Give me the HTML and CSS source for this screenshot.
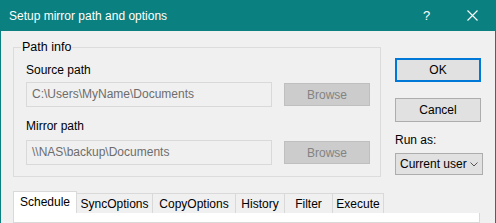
FILE: index.html
```html
<!DOCTYPE html>
<html>
<head>
<meta charset="utf-8">
<link rel="stylesheet" href="styles.css">
</head>
<body>
<div class="window">
  <div class="titlebar">
    <span class="title">Setup mirror path and options</span>
    <span class="help">?</span>
    <span class="close"><svg width="11" height="11" viewBox="0 0 11 11"><path d="M0.5 0.5 L10.5 10.5 M10.5 0.5 L0.5 10.5" stroke="#fff" stroke-width="1.1" fill="none"/></svg></span>
  </div>
  <div class="content">
    <div class="top">
      <fieldset class="group">
        <legend>Path info</legend>
        <div class="label first">Source path</div>
        <div class="row first">
          <div class="input">C:\Users\MyName\Documents</div>
          <div class="btn disabled">Browse</div>
        </div>
        <div class="label">Mirror path</div>
        <div class="row">
          <div class="input">\\NAS\backup\Documents</div>
          <div class="btn disabled">Browse</div>
        </div>
      </fieldset>
      <div class="side">
        <div class="btn default">OK</div>
        <div class="btn normal">Cancel</div>
        <div class="runlabel">Run as:</div>
        <div class="combo"><span class="combotext">Current user</span><svg class="chev" width="8" height="5" viewBox="0 0 8 5"><path d="M0.5 0.5 L4 4 L7.5 0.5" stroke="#555" stroke-width="1" fill="none"/></svg></div>
      </div>
    </div>
    <div class="tabs">
      <div class="tab active t-schedule">Schedule</div>
      <div class="tab t-sync">SyncOptions</div>
      <div class="tab t-copy">CopyOptions</div>
      <div class="tab t-history">History</div>
      <div class="tab t-filter">Filter</div>
      <div class="tab t-execute">Execute</div>
    </div>
    <div class="panel"></div>
  </div>
</div>
</body>
</html>
```

FILE: styles.css
```css
* { box-sizing: border-box; }
html, body { margin: 0; padding: 0; }
body {
  width: 496px;
  height: 223px;
  overflow: hidden;
  background: #f0f0f0;
  font-family: "Liberation Sans", Arial, sans-serif;
  font-size: 12px;
  color: #000;
}
.window {
  width: 496px;
  height: 223px;
  border-left: 1px solid #0a8080;
  border-right: 1px solid #0a8080;
  background: #f0f0f0;
  display: flex;
  flex-direction: column;
}
.titlebar {
  height: 31px;
  flex: none;
  background: #0a8080;
  color: #fff;
  display: flex;
  align-items: center;
  padding-left: 8px;
  font-size: 12px;
}
.title { flex: 1; }
.help { width: 7px; margin-right: 37px; font-size: 13px; }
.close { width: 11px; height: 11px; margin-right: 17px; display: flex; }
.content {
  flex: 1;
  padding-left: 12px;
  display: flex;
  flex-direction: column;
}
.top {
  display: flex;
  align-items: flex-start;
}
.group {
  margin: 9px 0 0 0;
  width: 368px;
  height: 137px;
  border: 1px solid #dcdcdc;
  padding: 0 10px 0 12px;
}
.group legend {
  padding: 0 1px;
  margin-left: -5px;
  line-height: 15px;
  font-size: 12.5px;
}
.label {
  line-height: 15px;
  margin-top: 2px;
}
.label.first { margin-top: 8px; }
.row {
  display: flex;
  align-items: center;
  margin-top: 6px;
  margin-bottom: 12px;
}
.row.first { margin-top: 4px; }
.input {
  width: 246px;
  height: 25px;
  border: 1px solid #d9d9d9;
  background: #f0f0f0;
  color: #6d6d6d;
  padding-left: 5px;
  line-height: 23px;
}
.btn {
  display: flex;
  align-items: center;
  justify-content: center;
}
.btn.disabled {
  margin-left: 12px;
  width: 86px;
  height: 23px;
  background: #cccccc;
  border: 1px solid #bfbfbf;
  color: #838383;
}
.side {
  margin-left: 14px;
  padding-top: 27px;
  display: flex;
  flex-direction: column;
}
.btn.default {
  width: 86px;
  height: 24px;
  background: #e1e1e1;
  border: 2px solid #0078d7;
}
.btn.normal {
  margin-top: 16px;
  width: 86px;
  height: 24px;
  background: #e1e1e1;
  border: 1px solid #adadad;
}
.runlabel {
  margin-top: 11px;
  line-height: 15px;
}
.combo {
  margin-top: 5px;
  width: 88px;
  height: 22px;
  background: #e1e1e1;
  border: 1px solid #adadad;
  display: flex;
  align-items: center;
  padding-left: 4px;
  overflow: hidden;
}
.combotext {
  width: 67px;
  flex: none;
  white-space: nowrap;
}
.chev { margin-left: 3px; flex: none; }
.tabs {
  margin-top: 14px;
  display: flex;
  align-items: flex-end;
  height: 22px;
}
.tab {
  height: 20px;
  border: 1px solid #d9d9d9;
  border-left: none;
  border-bottom: none;
  background: #f0f0f0;
  text-align: center;
  line-height: 21px;
  white-space: nowrap;
}
.tab.active {
  height: 22px;
  background: #fff;
  border-left: 1px solid #d9d9d9;
  line-height: 21px;
}
.t-schedule { width: 64px; }
.t-sync { width: 76px; }
.t-copy { width: 83px; }
.t-history { width: 49px; }
.t-filter { width: 48px; }
.t-execute { width: 51px; }
.panel {
  width: 467px;
  flex: 1;
  background: #fff;
  border: 1px solid #d9d9d9;
  border-top: none;
}
```
